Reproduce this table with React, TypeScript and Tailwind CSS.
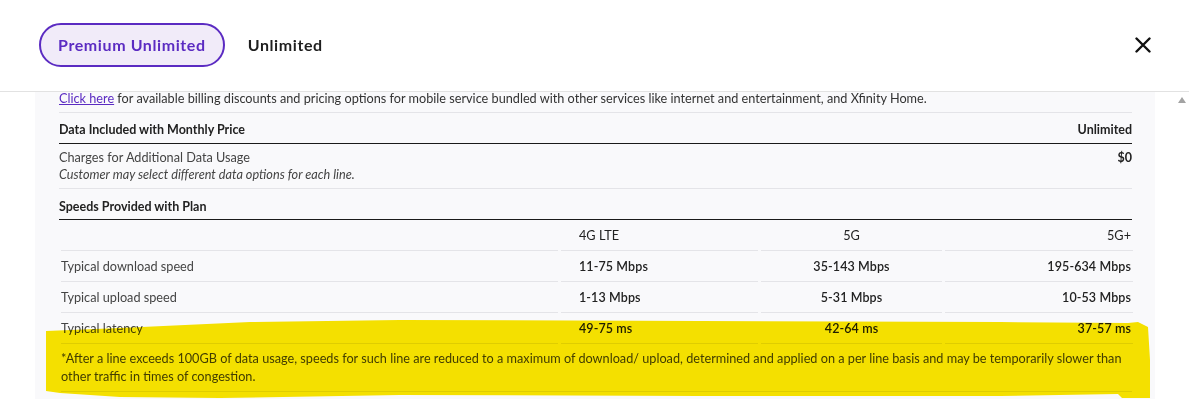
import React from "react"

const rows = [
  { label: "Typical download speed", a: "11-75 Mbps", b: "35-143 Mbps", c: "195-634 Mbps" },
  { label: "Typical upload speed", a: "1-13 Mbps", b: "5-31 Mbps", c: "10-53 Mbps" },
  { label: "Typical latency", a: "49-75 ms", b: "42-64 ms", c: "37-57 ms" },
]

export default function App() {
  return (
    <div className="relative w-[1189px] h-[399px] overflow-hidden bg-white text-[#2b2b2b] font-['Lato','Noto_Sans',sans-serif]">
      {/* header */}
      <div className="h-[92px] border-b border-[#e2e2e2] flex items-center pl-[39px] pr-[38px]">
        <div className="flex items-center gap-[23px] -mt-[2px]">
          <button className="h-[44px] px-[17px] rounded-full border-2 border-[#5b2bc2] bg-[#f1ebf9] text-[#5b2bc2] text-[16px] font-bold tracking-[0.6px]">
            Premium Unlimited
          </button>
          <span className="text-[16px] font-bold tracking-[0.6px] text-[#1e1e1e]">Unlimited</span>
        </div>
        <div className="ml-auto">
          <svg width="16" height="16" viewBox="0 0 16 16" className="-mt-[1px]">
            <path d="M1.5 1.5 L14.5 14.5 M14.5 1.5 L1.5 14.5" stroke="#111" strokeWidth="2.4" strokeLinecap="round" />
          </svg>
        </div>
      </div>

      {/* body */}
      <div className="flex">
        <div className="ml-[35px] w-[1120px] h-[307px] bg-[#f9f9fb] pl-[24px] pr-[23px] text-[12.7px]">
          <div className="h-[21px] border-b border-[#e4e4e8] leading-[12px] text-[#333]">
            <a className="text-[#5b2bc2] underline">Click here</a> for available billing discounts and pricing options for mobile service bundled with other services like internet and entertainment, and Xfinity Home.
          </div>
          <div className="flex justify-between pt-[10px] pb-[6px] leading-[14px] text-[12.5px] font-bold text-[#222] border-b border-[#1a1a1a]">
            <span>Data Included with Monthly Price</span>
            <span>Unlimited</span>
          </div>
          <div className="flex justify-between pt-[5px] pb-[5px] leading-[17px] border-b border-[#e4e4e8]">
            <div className="text-[#444]">
              <div>Charges for Additional Data Usage</div>
              <div className="italic">Customer may select different data options for each line.</div>
            </div>
            <span className="font-bold text-[12.5px] text-[#222]">$0</span>
          </div>
          <div className="pt-[11px] pb-[5px] leading-[14px] text-[12.5px] font-bold text-[#222] border-b border-[#1a1a1a]">
            Speeds Provided with Plan
          </div>

          <div className="ml-[2px] grid grid-cols-[497px_197px_181px_188px] gap-x-[3px]">
            <div className="h-[31px] border-b border-[#e4e4e8]"></div>
            <div className="h-[31px] pt-[2px] border-b border-[#e4e4e8] flex items-center pl-[18px] text-[#222]">4G LTE</div>
            <div className="h-[31px] pt-[2px] border-b border-[#e4e4e8] flex items-center justify-center text-[#222]">5G</div>
            <div className="h-[31px] pt-[2px] border-b border-[#e4e4e8] flex items-center justify-end pr-[2px] text-[#222]">5G+</div>
            {rows.map((r) => (
              <React.Fragment key={r.label}>
                <div className="h-[31px] pt-[2px] border-b border-[#e4e4e8] flex items-center text-[#444]">{r.label}</div>
                <div className="h-[31px] pt-[2px] border-b border-[#e4e4e8] flex items-center pl-[18px] text-[12.5px] font-semibold tracking-[0.1px] text-[#222]">{r.a}</div>
                <div className="h-[31px] pt-[2px] border-b border-[#e4e4e8] flex items-center justify-center text-[12.5px] font-semibold tracking-[0.1px] text-[#222]">{r.b}</div>
                <div className="h-[31px] pt-[2px] border-b border-[#e4e4e8] flex items-center justify-end pr-[2px] text-[12.5px] font-semibold tracking-[0.1px] text-[#222]">{r.c}</div>
              </React.Fragment>
            ))}
          </div>
          <div className="ml-[2px] pt-[5px] pb-[6px] leading-[18px] text-[#444] border-b border-[#e4e4e8]">
            *After a line exceeds 100GB of data usage, speeds for such line are reduced to a maximum of download/ upload, determined and applied on a per line basis and may be temporarily slower than other traffic in times of congestion.
          </div>
        </div>
        <div className="ml-auto w-[14px] flex justify-center pt-[5px]">
          <svg width="8" height="6" viewBox="0 0 8 6">
            <path d="M0 6 L4 0 L8 6 Z" fill="#a3a3a3" />
          </svg>
        </div>
      </div>

      {/* yellow highlighter annotation */}
      <svg className="absolute left-0 top-0 pointer-events-none mix-blend-multiply" width="1189" height="399" viewBox="0 0 1189 399">
        <path
          d="M46 331 L120 328 L250 322 L400 320 L700 321 L1000 322 L1128 323 L1138 322 L1148 327 L1150 360 L1150 398 L1122 398 L1118 394 L1000 396 L700 396 L400 395 L220 398 L120 397 L60 393 L46 391 Z"
          fill="#fae600"
        />
      </svg>
    </div>
  )
}
